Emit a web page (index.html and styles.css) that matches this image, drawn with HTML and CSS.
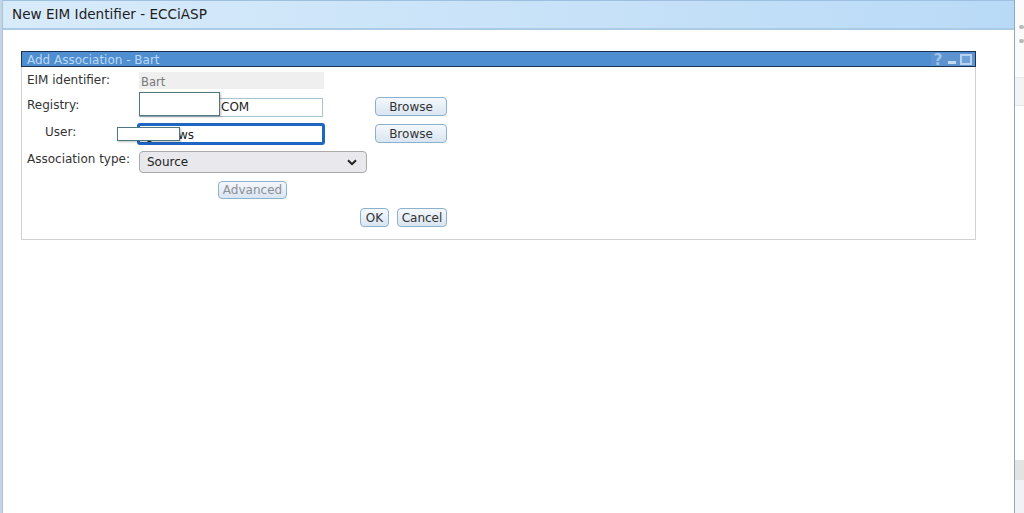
FILE: index.html
```html
<!DOCTYPE html>
<html lang="en">
<head>
<meta charset="utf-8">
<title>New EIM Identifier - ECCiASP</title>
<link rel="stylesheet" href="styles.css">
</head>
<body>
<div class="page">
  <div class="strip-left"></div>
  <main class="dialog">
    <header class="dialog-title">New EIM Identifier - ECCiASP</header>
    <section class="panel">
      <div class="panel-head">
        <span class="panel-title">Add Association - Bart</span>
        <span class="panel-icons">
          <span class="help">?</span>
          <svg class="ico" width="11" height="11" viewBox="0 0 11 11"><rect x="1" y="7" width="8" height="3" fill="#c3dbf2"/></svg>
          <svg class="ico" width="12" height="11" viewBox="0 0 12 11"><rect x="1" y="1" width="10" height="9" fill="#6fa0d6" stroke="#b9d3ee" stroke-width="2"/></svg>
        </span>
      </div>
      <div class="form">
        <div class="row row-id">
          <label class="lab">EIM identifier:</label>
          <div class="readonly">Bart</div>
        </div>
        <div class="row row-reg">
          <label class="lab">Registry:</label>
          <div class="field"><span class="val">COM</span><span class="mask mask-reg"></span></div>
          <button class="btn browse">Browse</button>
        </div>
        <div class="row row-user">
          <label class="lab lab-in">User:</label>
          <div class="field focus"><span class="val-g">g</span><span class="val">ws</span><span class="mask mask-user"></span></div>
          <button class="btn browse">Browse</button>
        </div>
        <div class="row row-type">
          <label class="lab">Association type:</label>
          <div class="select"><span>Source</span>
            <svg width="10" height="7" viewBox="0 0 10 7"><path d="M1 1.2 5 5.2 9 1.2" fill="none" stroke="#222" stroke-width="2"/></svg>
          </div>
        </div>
        <div class="row-adv"><button class="btn adv">Advanced</button></div>
        <div class="row-act"><button class="btn ok">OK</button><button class="btn cancel">Cancel</button></div>
      </div>
    </section>
  </main>
  <aside class="strip-right">
    <div class="sr a"><span class="dot"></span><span class="dot"></span></div>
    <div class="sr b"></div>
    <div class="sr c"></div>
    <div class="sr d"></div>
    <div class="sr e"></div>
  </aside>
</div>
</body>
</html>
```
FILE: styles.css
```css
* { box-sizing: border-box; }
html, body { margin: 0; height: 100%; overflow: hidden; background: #fff; }
body { font-family: "DejaVu Sans", sans-serif; font-size: 12px; color: #2b2b2b; }
.page { display: flex; width: 1024px; height: 513px; }
.strip-left { width: 2px; background: #c4d6e6; }
.dialog { width: 1014px; background: #fff; border-left: 1px solid #a9c3d9; border-right: 1px solid #8fa9bd; border-top: 1px solid #9dbfe0; }
.dialog-title { height: 29px; padding: 0 0 1px 9px; display: flex; align-items: center; font-size: 13.6px; color: #1d1d1d; background: linear-gradient(90deg, #d8ebfb, #c6e1f8 60%, #b9daf7); border-bottom: 2px solid #a9cbe6; }
.panel { margin: 21px 0 0 18px; width: 955px; height: 189px; border: 1px solid #d2d2d2; border-top: 0; }
.panel-head { height: 16px; margin: 0 -1px; padding: 1px 0 0 5px; display: flex; justify-content: space-between; align-items: center; background: #4f8ed0; border: 1px solid #1b3350; color: #bcd9f4; font-size: 12px; }
.panel-icons { display: flex; align-items: center; gap: 2px; height: 100%; padding-right: 3px; background: #5d94cf; }
.help { font-weight: bold; font-size: 15px; line-height: 14px; color: #9cc3ea; width: 14px; text-align: center; }
.form { position: relative; padding: 5px 0 0 5px; }
.row { display: flex; align-items: flex-start; }
.lab { width: 112px; flex: none; font-size: 12px; color: #333; }
.lab-in { padding-left: 18px; }
.row-id { height: 26px; }
.row-id .lab { padding-top: 1px; }
.readonly { width: 185px; height: 17px; background: #efefef; color: #777; padding: 3px 0 0 2px; font-size: 11.5px; line-height: 14px; }
.row-reg { height: 26px; }
.field { position: relative; width: 184px; height: 19px; border: 1px solid #a9c3d3; background: #fff; padding-left: 81px; font-size: 12px; line-height: 17px; color: #222; }
.row-user { height: 28px; }
.row-user .lab { width: 110px; padding-top: 1px; }
.row-user .field { width: 188px; height: 22px; border: 3px solid #1f66c2; border-radius: 3px; padding-left: 6px; line-height: 18px; margin-top: -1px; }
.val-g { display: inline-block; width: 32px; }
.mask { position: absolute; background: #fff; border: 1px solid #4e7780; box-shadow: 1px 1px 2px rgba(0,0,0,.25); }
.mask-reg { left: -1px; top: -7px; width: 81px; height: 24px; }
.mask-user { left: -23px; top: 1px; width: 63px; height: 14px; }
.browse { width: 72px; height: 19px; margin-left: 52px; font-size: 12px; margin-top: -1px; }
.row-user .browse { margin-left: 50px; margin-top: 0; }
.row-type { height: 29px; }
.select { width: 228px; height: 22px; display: flex; justify-content: space-between; align-items: center; padding: 0 9px 0 7px; border: 1px solid #aaa; border-radius: 4px; background: #e9e9ed; font-size: 12px; color: #222; margin-top: -1px; }
.btn { padding: 0; font-family: inherit; font-size: 12px; color: #333; border: 1px solid #8db0cc; border-radius: 4px; background: linear-gradient(#f4f8fc, #d9e5f1); }
.row-adv { height: 27px; padding-left: 191px; }
.adv { width: 69px; height: 18px; color: #8a8f96; }
.row-act { display: flex; gap: 8px; padding-left: 333px; }
.ok { width: 29px; height: 19px; }
.cancel { width: 50px; height: 19px; }
.strip-right { flex: 1; display: flex; flex-direction: column; background: #fff; }
.sr.a { height: 78px; padding: 25px 0 0 4px; background: #fbfbfb; border-bottom: 1px solid #e8e8e8; display: flex; flex-direction: column; gap: 10px; }
.dot { display: block; width: 5px; height: 4px; border-radius: 2px; background: #b9b9b9; }
.sr.b { height: 27px; background: #f3f4f6; }
.sr.c { height: 29px; background: #fff; border-top: 1px solid #e6e6e6; }
.sr.d { height: 326px; background: #fff; }
.sr.e { flex: 1; background: #f0f3f6; border-top: 20px solid #e3e3e3; }
```
